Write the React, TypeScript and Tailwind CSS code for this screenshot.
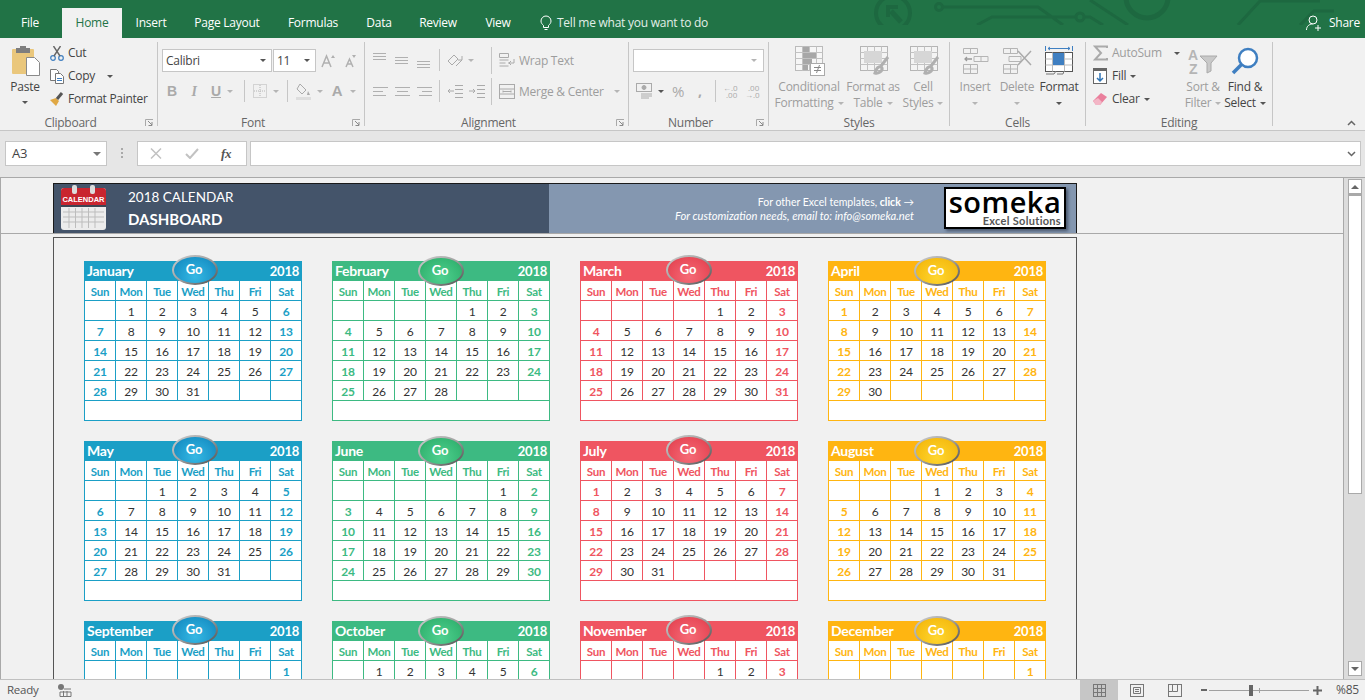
import React from "react";

const THEMES = [
  { bg: "bg-[#1b9fc6]", border: "border-[#1b9fc6]", text: "text-[#1b9fc6]", inner: "bg-[radial-gradient(ellipse_at_50%_75%,#35b8e4,#1a94c8_70%,#1279ad)]", go: "left-[88px] -top-[6px]" },
  { bg: "bg-[#3dba82]", border: "border-[#3dba82]", text: "text-[#3dba82]", inner: "bg-[radial-gradient(ellipse_at_50%_75%,#4fd08f,#35b673_70%,#1f9a5c)]", go: "left-[86px] -top-[5px]" },
  { bg: "bg-[#ef5561]", border: "border-[#ef5561]", text: "text-[#ef5561]", inner: "bg-[radial-gradient(ellipse_at_50%_75%,#f56a76,#e84a58_70%,#c9303f)]", go: "left-[86px] -top-[6px]" },
  { bg: "bg-[#ffb511]", border: "border-[#ffb511]", text: "text-[#ffb511]", inner: "bg-[radial-gradient(ellipse_at_50%_75%,#ffd52e,#f6bd12_70%,#dc9c06)]", go: "left-[86px] -top-[5px]" },
];
const MONTHS = ["January","February","March","April","May","June","July","August","September","October","November","December"];
const DAYS = ["Sun","Mon","Tue","Wed","Thu","Fri","Sat"];

function monthCells(m: number) {
  const first = new Date(2018, m, 1).getDay();
  const count = new Date(2018, m + 1, 0).getDate();
  const cells: (number | null)[] = [];
  for (let i = 0; i < first; i++) cells.push(null);
  for (let d = 1; d <= count; d++) cells.push(d);
  while (cells.length < 35) cells.push(null);
  return cells.slice(0, 35);
}

function Month({ m }: { m: number }) {
  const t = THEMES[m % 4];
  const cells = monthCells(m);
  return (
    <div className="relative w-[218px] h-[160px] font-['Lato',sans-serif]">
      <div className={`${t.bg} h-[20px] flex items-center justify-between pl-[3px] pr-[3px] text-white font-bold text-[14px] leading-[20px]`}>
        <span>{MONTHS[m]}</span>
        <span className="text-[13px]">2018</span>
      </div>
      <div className={`grid grid-cols-[repeat(7,31px)] border-l ${t.border} bg-white w-[218px]`}>
        {DAYS.map((d) => (
          <div key={d} className={`h-[20px] border-r border-b ${t.border} ${t.text} text-[11.5px] font-bold text-center leading-[22px]`}>{d}</div>
        ))}
        {cells.map((c, i) => (
          <div key={i} className={`h-[20px] border-r border-b ${t.border} text-[12px] text-center leading-[22px] ${i % 7 === 0 || i % 7 === 6 ? `${t.text} font-bold` : "text-[#333]"}`}>{c}</div>
        ))}
      </div>
      <div className={`h-[20px] bg-white border-l border-r border-b ${t.border}`} />
      <div className={`absolute ${t.go} w-[46px] h-[30px] rounded-[50%] bg-gradient-to-br from-[#d0d0d0] via-[#a0a0a0] to-[#4a4a4a] flex items-center justify-center`}>
        <div className={`w-[42px] h-[26px] rounded-[50%] ${t.inner} flex items-center justify-center text-white font-bold text-[13px] pr-[2px]`}>Go</div>
      </div>
    </div>
  );
}

function Caret({ dark }: { dark?: boolean }) {
  return <span className={`inline-block w-0 h-0 border-x-[3px] border-x-transparent border-t-[3px] ${dark ? "border-t-[#555]" : "border-t-[#b5b5b5]"}`} />;
}

function Launcher() {
  return (
    <svg className="absolute right-[3px] -bottom-[1px]" width="9" height="8" viewBox="0 0 9 8" fill="none">
      <path d="M.5 7V.5H8" stroke="#a9a9a9" /><path d="M3 2l4 4M7 3v3.5H3.5" stroke="#8a8a8a" />
    </svg>
  );
}

function Group({ className, label, launcher, pr, children }: { className: string; label: string; launcher?: boolean; pr?: boolean; children: React.ReactNode }) {
  return (
    <div className={`relative h-[84px] shrink-0 border-r border-[#c6c6c6] flex flex-col ${className}`}>
      <div className="h-[75px]">{children}</div>
      <div className={`h-[9px] leading-[11px] text-center text-[12px] text-[#666] ${pr ? "pr-[16px]" : ""}`}>{label}</div>
      {launcher && <Launcher />}
    </div>
  );
}

function Big({ className, icon, l1, l2, dim, caret = true }: { className: string; icon: React.ReactNode; l1: string; l2?: string; dim?: boolean; caret?: boolean }) {
  const col = dim ? "text-[#9d9d9d]" : "text-[#444]";
  return (
    <div className={`flex flex-col items-center ${className} ${col} whitespace-nowrap`}>
      <div className="mt-[4px] h-[30px] flex items-center justify-center">{icon}</div>
      <div className="mt-[3px] leading-[16px] h-[16px]">{l1}</div>
      <div className="leading-[16px] h-[16px] flex items-center gap-[4px]">
        {l2 && <span>{l2}</span>}
        {caret && <Caret dark={!dim} />}
      </div>
    </div>
  );
}

const Sep = ({ className }: { className: string }) => <div className={`w-px bg-[#c6c6c6] shrink-0 ${className}`} />;

function Lines({ ins, y, gap }: { ins: number[]; y: number; gap: number }) {
  return (
    <svg className="block" width="15" height="22" viewBox="0 0 15 22" stroke="#b0b0b0">
      {[0, 1, 2].map((i) => <path key={i} d={`M${ins[i]} ${y + i * gap + 0.5}H${15 - ins[i + 3]}`} />)}
    </svg>
  );
}

const GridIcon = () => (
  <svg className="ml-[3px]" width="30" height="30" viewBox="0 0 30 30" fill="none">
    <rect x=".5" y=".5" width="27" height="24" fill="#f4f4f4" stroke="#b5b5b5" />
    <path d="M.5 6.500h27M.5 12.500h27M.5 18.500h27M7.500.5v24M14.500.5v24M21.500.5v24" stroke="#c2c2c2" />
    <rect x="4" y="5" width="18" height="12" fill="#d6d6d6" />
    <path d="M28 11L21 20M16 24c2-4 5-4 6-2 1 3-4 6-7 5z" stroke="#b0b0b0" strokeWidth="3" />
  </svg>
);

export default function App() {
  return (
    <div className="w-[1365px] h-[700px] overflow-hidden flex flex-col bg-[#f1f1f1] font-['Open_Sans',sans-serif] text-[12px] tracking-[-0.25px] text-[#444]">
      {/* Title + tabs */}
      <div className="relative h-[38px] shrink-0 bg-[#217346] text-white text-[12px]">
        <svg className="absolute left-0 top-0" width="1365" height="25" viewBox="0 0 1365 25" fill="none" stroke="#1d6840" strokeWidth="3">
          <circle cx="893" cy="13" r="17" strokeWidth="4" />
          <path d="M891 11l10 11" strokeWidth="5" /><path d="M888 17V7h10" strokeWidth="4" />
          <circle cx="939" cy="7" r="3.5" />
          <path d="M943 7h95l25 18M977 25l15-8h84M1084 17h6l13 8M1090 0l38 25" />
          <circle cx="1147" cy="-3" r="21" strokeWidth="5" />
          <circle cx="1080" cy="17" r="4" />
          <path d="M1238 25L1260 1h60M1300 25l14-14h20" />
        </svg>
        <div className="relative flex items-end h-[38px]">
          <div className="w-[60px] mr-[2px] text-center leading-[30px] h-[30px]">File</div>
          <div className="w-[60px] text-center leading-[30px] h-[30px] bg-[#f1f1f1] text-[#217346]">Home</div>
          <div className="w-[58px] text-center leading-[30px] h-[30px]">Insert</div>
          <div className="w-[94px] text-center leading-[30px] h-[30px] whitespace-nowrap">Page Layout</div>
          <div className="w-[78px] text-center leading-[30px] h-[30px]">Formulas</div>
          <div className="w-[54px] text-center leading-[30px] h-[30px]">Data</div>
          <div className="w-[64px] text-center leading-[30px] h-[30px]">Review</div>
          <div className="w-[56px] text-center leading-[30px] h-[30px]">View</div>
          <div className="h-[30px] flex items-center pl-[14px] gap-[5px] text-[#e3efe8] whitespace-nowrap">
            <svg width="12" height="16" viewBox="0 0 12 16" fill="none" stroke="#fff" strokeWidth="1"><path d="M3.5 10.5C2 9 1 8 1 6a5 5 0 0110 0c0 2-1 3-2.5 4.5v2h-5zM4.5 14.500h3" /></svg>
            <span>Tell me what you want to do</span>
          </div>
          <div className="ml-auto h-[30px] flex items-center gap-[7px] pr-[5px] whitespace-nowrap">
            <svg width="16" height="16" viewBox="0 0 16 16" fill="none" stroke="#fff" strokeWidth="1"><circle cx="7" cy="5" r="4" /><path d="M0.500 15c0-4 3-6 6-6M9 13h6M12 10v6" /></svg>
            <span>Share</span>
          </div>
        </div>
      </div>

      {/* Ribbon */}
      <div className="relative h-[93px] shrink-0 border-b border-[#c6c6c6] pt-[4px] flex">
        {/* Clipboard */}
        <Group className="w-[158px]" label="Clipboard" launcher pr>
          <div className="flex">
            <div className="w-[50px] flex flex-col items-center">
              <svg className="mt-[4px] ml-[2px]" width="30" height="30" viewBox="0 0 30 30" fill="none">
                <rect x="1" y="3" width="22" height="25" rx="1" fill="#eac77c" />
                <rect x="5" y="2" width="14" height="5" fill="#7e7e7e" /><rect x="9" y="0" width="6" height="4" fill="#7e7e7e" />
                <path d="M15.500 11.500h8l5 5v13h-13z" fill="#fff" stroke="#8a8a8a" />
              </svg>
              <div className="mt-[3px] leading-[16px]">Paste</div>
              <div className="mt-[5px] leading-[0]"><Caret dark /></div>
            </div>
            <div className="flex flex-col whitespace-nowrap tracking-[-0.3px]">
              <div className="h-[22px] flex items-center gap-[4px]">
                <svg width="14" height="15" viewBox="0 0 14 15" fill="none"><circle cx="3" cy="12" r="2.300" stroke="#3f7fc1" strokeWidth="1.200" /><circle cx="11" cy="12" r="2.300" stroke="#3f7fc1" strokeWidth="1.200" /><path d="M4 10L10.500 0M10 10L3.500 0" stroke="#666" strokeWidth="1.400" /></svg>
                <span>Cut</span>
              </div>
              <div className="h-[24px] flex items-center gap-[4px]">
                <svg width="14" height="15" viewBox="0 0 14 15" fill="none" stroke="#777"><path d="M.5.5h6l2 2v9h-8z" fill="#fff" /><path d="M5.500 4.500h5l3 3v7h-8z" fill="#fff" /><path d="M7 9.500h5M7 11.500h5" stroke="#3f7fc1" /></svg>
                <span>Copy</span>
                <span className="ml-[8px] leading-[0]"><Caret dark /></span>
              </div>
              <div className="h-[22px] flex items-center gap-[4px]">
                <svg width="14" height="14" viewBox="0 0 14 14" fill="none"><path d="M0 8l6-2 3 3-3 5z" fill="#e0a844" /><path d="M7 7l5-6" stroke="#555" strokeWidth="3" /></svg>
                <span>Format Painter</span>
              </div>
            </div>
          </div>
        </Group>

        {/* Font */}
        <Group className="w-[207px]" label="Font" launcher pr>
          <div className="flex items-center mt-[7px] pl-[4px]">
            <div className="w-[110px] h-[23px] bg-white border border-[#c6c6c6] flex items-center justify-between pl-[3px] pr-[5px] text-[#444]">
              <span>Calibri</span><Caret dark />
            </div>
            <div className="w-[43px] h-[23px] bg-white border border-[#c6c6c6] ml-px flex items-center justify-between pl-[3px] pr-[5px]">
              <span>11</span><Caret dark />
            </div>
            <svg className="ml-[5px]" width="36" height="14" viewBox="0 0 36 14"><path d="M1 13L5.500 2 10 13M3 9h5M25 13l3.500-8 3.500 8M26.500 10h4" stroke="#b0b0b0" strokeWidth="1.500" fill="none" /><path d="M10 4l2-3 2 3zM31 1l2 3 2-3z" fill="#b0b0b0" /></svg>
          </div>
          <div className="flex items-center h-[18px] mt-[10px] pl-[3px] text-[#aaa]">
            <span className="w-[22px] text-center font-bold text-[14px] font-['Liberation_Sans',sans-serif]">B</span>
            <span className="w-[22px] text-center italic font-bold text-[14px] font-['Liberation_Serif',serif]">I</span>
            <span className="w-[22px] text-center font-bold underline text-[14px] font-['Liberation_Sans',sans-serif]">U</span>
            <span className="w-[12px] leading-[0]"><Caret /></span>
            <Sep className="h-[22px] ml-[5px]" />
            <svg className="ml-[8px]" width="15" height="15" viewBox="0 0 15 15" fill="none" stroke="#b5b5b5" strokeDasharray="1 1"><rect x=".5" y=".5" width="13" height="13" /><path d="M7 1v12M1 7h12" /></svg>
            <span className="w-[14px] pl-[5px] leading-[0]"><Caret /></span>
            <Sep className="h-[22px] ml-[5px]" />
            <svg className="ml-[8px]" width="16" height="17" viewBox="0 0 16 17"><path d="M4 1l6 6-4 4-5-5z" fill="none" stroke="#aaa" /><path d="M12 8l2 4h-3z" fill="#aaa" /><rect y="14" width="15" height="3" fill="#dedede" /></svg>
            <span className="w-[14px] pl-[5px] leading-[0]"><Caret /></span>
            <span className="w-[20px] text-center font-bold text-[15px] font-['Liberation_Sans',sans-serif] ml-[1px]">A</span>
            <span className="pl-[3px] leading-[0]"><Caret /></span>
          </div>
        </Group>

        {/* Alignment */}
        <Group className="w-[264px]" label="Alignment" launcher pr>
          <div className="flex items-center h-[30px] mt-[3px] pl-[8px]">
            <div className="w-[22px]"><Lines ins={[0, 0, 0, 2, 2, 2]} y={4} gap={3} /></div>
            <div className="w-[22px]"><Lines ins={[0, 0, 0, 2, 2, 2]} y={8} gap={3} /></div>
            <div className="w-[22px]"><Lines ins={[0, 0, 0, 2, 2, 2]} y={12} gap={3} /></div>
            <Sep className="h-[22px]" />
            <svg className="ml-[7px]" width="16" height="16" viewBox="0 0 16 16" fill="none" stroke="#aaa"><path d="M1 9l6-6 4 4-6 6zM9 14l6-6M15 4v4h-4" /></svg>
            <span className="ml-[5px] leading-[0]"><Caret /></span>
            <Sep className="h-[27px] ml-[17px]" />
            <svg className="ml-[7px]" width="17" height="16" viewBox="0 0 17 16" fill="none" stroke="#aaa"><path d="M.5 1.500h9v4h-9zM.5 8h9M.5 11h6M.5 14h9M9 11h6V7M12 9l-2 2 2 2" /></svg>
            <span className="ml-[3px] pt-[2px] text-[#9d9d9d] whitespace-nowrap">Wrap Text</span>
          </div>
          <div className="flex items-center h-[30px] mt-[1px] pl-[8px]">
            <div className="w-[22px]"><Lines ins={[0, 0, 0, 0, 5, 2]} y={7} gap={4} /></div>
            <div className="w-[22px]"><Lines ins={[0, 2, 0, 0, 2, 0]} y={7} gap={4} /></div>
            <div className="w-[22px]"><Lines ins={[0, 5, 2, 0, 0, 0]} y={7} gap={4} /></div>
            <Sep className="h-[22px]" />
            <svg className="ml-[7px]" width="38" height="14" viewBox="0 0 38 14" fill="none" stroke="#aaa"><path d="M8 1.500h8M8 5.500h8M8 9.500h8M8 13.500h8M1 7h6M3 5L1 7l2 2" /><path d="M30 1.500h8M30 5.500h8M30 9.500h8M30 13.500h8M22 7h6M26 5l2 2-2 2" /></svg>
            <Sep className="h-[27px] ml-[6px] mr-[7px]" />
            <svg width="16" height="15" viewBox="0 0 16 15" fill="none" stroke="#aaa"><rect x=".5" y=".5" width="15" height="14" /><path d="M.5 5h15M.5 10h15M4 7.500h8M4 6.500v2M12 6.500v2" /></svg>
            <span className="ml-[4px] pt-[2px] text-[#9d9d9d] whitespace-nowrap">Merge &amp; Center</span>
            <span className="ml-[10px] leading-[0]"><Caret /></span>
          </div>
        </Group>

        {/* Number */}
        <Group className="w-[140px]" label="Number" launcher pr>
          <div className="mt-[7px] ml-[4px] w-[131px] h-[23px] bg-white border border-[#c6c6c6] flex items-center justify-end pr-[6px]"><Caret /></div>
          <div className="flex items-center h-[18px] mt-[10px] pl-[7px] text-[#aaa]">
            <svg width="17" height="17" viewBox="0 0 17 17" fill="none" stroke="#aaa"><rect x=".5" y=".5" width="15" height="8" /><circle cx="8" cy="4.500" r="2" fill="#aaa" /><path d="M5 11h11M5 13h11M5 15h8" /></svg>
            <span className="ml-[5px] leading-[0]"><Caret dark /></span>
            <span className="ml-[6px] w-[16px] text-[15px] text-center">%</span>
            <span className="ml-[12px] w-[10px] text-[14px] font-bold leading-[12px]">,</span>
            <Sep className="h-[22px] ml-[7px]" />
            <div className="ml-[7px] w-[22px] text-[8px] leading-[7px] tracking-normal"><div>←.0</div><div className="pl-[3px]">.00</div></div>
            <div className="w-[16px] text-[8px] leading-[7px] tracking-normal"><div className="pl-[3px]">.00</div><div>→.0</div></div>
          </div>
        </Group>

        {/* Styles */}
        <Group className="w-[181px]" label="Styles">
          <div className="flex pl-[3px] text-[#9d9d9d]">
            <Big className="w-[74px]" dim l1="Conditional" l2="Formatting" icon={
              <svg className="ml-[2px]" width="30" height="30" viewBox="0 0 30 30" fill="none">
                <rect x=".5" y=".5" width="27" height="24" fill="#f6f6f6" stroke="#bbb" />
                <path d="M7.500.5v24M14.500.5v24M21.500.5v24M.5 6.500h27M.5 12.500h27M.5 18.500h27" stroke="#c2c2c2" />
                <rect x="8" y="1" width="6" height="5" fill="#a7a7a7" /><rect x="8" y="7" width="13" height="5" fill="#a7a7a7" /><rect x="8" y="13" width="9" height="5" fill="#a7a7a7" /><rect x="8" y="19" width="5" height="5" fill="#a7a7a7" />
                <rect x="15.500" y="17.500" width="14" height="12" fill="#fff" stroke="#aaa" />
                <path d="M19 21.500h7M19 24.500h7M24.500 19l-3 8" stroke="#888" />
              </svg>
            } />
            <Big className="w-[54px]" dim l1="Format as" l2="Table" icon={<GridIcon />} />
            <Big className="w-[46px]" dim l1="Cell" l2="Styles" icon={<GridIcon />} />
          </div>
        </Group>

        {/* Cells */}
        <Group className="w-[136px]" label="Cells">
          <div className="flex pl-[4px]">
            <Big className="w-[42px]" dim l1="Insert" icon={
              <svg width="27" height="26" viewBox="0 0 27 26" fill="none" stroke="#b5b5b5"><path d="M1.500.5h14v5h-14zM8.500.5v5M1.500 16.500h14v9h-14zM1.500 21h14M8.500 16.500v9M12 8.500h14v5H12zM19 8.500v5" /><path d="M10 11H3M5 9l-2 2 2 2" stroke="#999" strokeWidth="1.300" /></svg>
            } />
            <Big className="w-[42px]" dim l1="Delete" icon={
              <svg width="30" height="26" viewBox="0 0 30 26" fill="none" stroke="#b5b5b5"><path d="M1.500.5h14v5h-14zM8.500.5v5M1.500 16.500h14v9h-14zM1.500 21h14M8.500 16.500v9M7 8.500h12v5H7z" /><path d="M16 3l13 14M29 3L16 17" stroke="#aaa" strokeWidth="1.500" /></svg>
            } />
            <Big className="w-[42px]" l1="Format" icon={
              <svg width="28" height="31" viewBox="0 0 28 31" fill="none"><path d="M.5 0v5M27.500 0v5M3 2.500h22M5 1L3 2.500 5 4M23 1l2 1.500L23 4" stroke="#3f7fc1" /><rect x=".5" y="6.500" width="27" height="19" fill="#fff" stroke="#555" /><path d="M.5 13h27M.5 19h27M7.500 6.500v19M19.500 6.500v19" stroke="#bbb" /><rect x="8" y="7" width="11" height="12" fill="#3f7fc1" /><path d="M1 28h8l2-3M12 28h6l1-3" stroke="#777" /></svg>
            } />
          </div>
        </Group>

        {/* Editing */}
        <Group className="w-[187px]" label="Editing">
          <div className="flex">
            <div className="w-[96px] pl-[7px] flex flex-col whitespace-nowrap">
              <div className="h-[22px] flex items-center gap-[4px] text-[#9d9d9d]">
                <svg width="15" height="16" viewBox="0 0 15 16" fill="none"><path d="M14 3V1.500H2L8 8l-6 6.500h12V13" stroke="#aaa" strokeWidth="2" /></svg>
                <span>AutoSum</span>
                <span className="ml-[8px] leading-[0]"><Caret dark /></span>
              </div>
              <div className="h-[24px] flex items-center gap-[4px]">
                <svg width="15" height="16" viewBox="0 0 15 16" fill="none"><rect x=".5" y=".5" width="13" height="15" fill="#fff" stroke="#666" /><rect y="0" width="14" height="3" fill="#666" /><path d="M7 5v8M4 10l3 3 3-3" stroke="#2f74b5" strokeWidth="1.500" /></svg>
                <span>Fill</span>
                <Caret dark />
              </div>
              <div className="h-[22px] flex items-center gap-[4px]">
                <svg width="15" height="13" viewBox="0 0 15 13"><path d="M0 8l8-8 6 4-7 8H3z" fill="#ea7f9c" /><path d="M0 8l3 4h4l2-3-4-4z" fill="#f3b6c6" /></svg>
                <span>Clear</span>
                <Caret dark />
              </div>
            </div>
            <Big className="w-[42px]" dim l1="Sort &" l2="Filter" icon={
              <svg width="30" height="27" viewBox="0 0 30 27" fill="none"><text x="0" y="12" fontSize="14" fontWeight="700" fill="#b5b5b5" fontFamily="Liberation Sans">A</text><text x="1" y="26" fontSize="14" fontWeight="700" fill="#b5b5b5" fontFamily="Liberation Sans">Z</text><path d="M12 8h17l-6 7v8l-4 2v-10z" fill="#c9c9c9" stroke="#aaa" /></svg>
            } />
            <Big className="w-[42px]" l1="Find &" l2="Select" icon={
              <svg width="28" height="28" viewBox="0 0 28 28" fill="none"><circle cx="17" cy="11" r="9" fill="#fff" stroke="#3f7fc1" strokeWidth="2.500" /><path d="M10.500 17.500L2 26" stroke="#3f7fc1" strokeWidth="3.500" /></svg>
            } />
          </div>
        </Group>
        <svg className="absolute right-[9px] bottom-[4px]" width="9" height="6" viewBox="0 0 9 6" fill="none"><path d="M1 5l3.500-3.500L8 5" stroke="#666" strokeWidth="1.500" /></svg>
      </div>

      {/* Formula bar */}
      <div className="h-[47px] shrink-0 bg-[#e6e6e6] border-b border-[#a9a9a9] flex pt-[10px]">
        <div className="ml-[5px] w-[102px] h-[25px] bg-white border border-[#c6c6c6] flex items-center justify-between pl-[6px] pr-[5px] text-[13px]">
          <span>A3</span>
          <span className="inline-block w-0 h-0 border-x-[4px] border-x-transparent border-t-[4px] border-t-[#777]" />
        </div>
        <div className="w-[30px] h-[25px] flex items-center justify-center">
          <svg width="3" height="11" viewBox="0 0 3 11" fill="#a9a9a9"><rect width="2" height="2" x="0" /><rect width="2" height="2" y="4" /><rect width="2" height="2" y="8" /></svg>
        </div>
        <div className="w-[110px] h-[25px] bg-white border border-[#c6c6c6] flex items-center pl-[12px]">
          <svg width="12" height="11" viewBox="0 0 12 11" fill="none"><path d="M1 .5l10 10M11 .5l-10 10" stroke="#c2c2c2" strokeWidth="1.500" /></svg>
          <svg className="ml-[23px]" width="14" height="11" viewBox="0 0 14 11" fill="none"><path d="M1 6l4 4 8-9" stroke="#c2c2c2" strokeWidth="2" /></svg>
          <span className="ml-[22px] font-['Liberation_Serif',serif] italic font-bold text-[13px] text-[#555]">fx</span>
        </div>
        <div className="ml-[3px] w-[1111px] h-[25px] bg-white border border-[#c6c6c6] flex items-center justify-end pr-[4px]">
          <svg width="9" height="6" viewBox="0 0 9 6" fill="none"><path d="M1 1l3.500 3.500L8 1" stroke="#666" strokeWidth="1.500" /></svg>
        </div>
      </div>

      {/* Sheet */}
      <div className="flex-1 min-h-0 flex overflow-hidden">
        <div className="w-[1344px] border-l border-r border-[#a9a9a9] flex flex-col min-h-0">
          <div className="h-[56px] shrink-0 border-b border-[#a9a9a9] pl-[52px] pt-[5px]">
            <div className="w-[1024px] h-[50px] flex border-t border-x border-[#1a1a1a] font-['Lato',sans-serif] text-white tracking-normal">
              <div className="w-[495px] bg-[#44546a] flex">
                <svg className="ml-[7px] mt-[1px]" width="46" height="45" viewBox="0 0 46 45" fill="none">
                  <rect x="0" y="3" width="45" height="42" rx="3" fill="#ececec" />
                  <path d="M0 6a3 3 0 013-3h39a3 3 0 013 3v14H0z" fill="#c9252f" />
                  <rect x="0" y="20" width="45" height="2" fill="#3c4654" />
                  <path d="M2 27h41M2 32h41M2 37h41M8 23v20M14.500 23v20M21 23v20M27.500 23v20M34 23v20" stroke="#bdbdbd" />
                  <rect x="11" y="0" width="5" height="9" rx="2" fill="#dcdcdc" /><rect x="29" y="0" width="5" height="9" rx="2" fill="#dcdcdc" />
                  <text x="22.500" y="17" textAnchor="middle" fontSize="7.500" fontWeight="700" fill="#fff" fontFamily="Liberation Sans">CALENDAR</text>
                </svg>
                <div className="ml-[21px]">
                  <div className="mt-[3px] text-[13.500px] leading-[20px] whitespace-nowrap">2018 CALENDAR</div>
                  <div className="mt-[2px] text-[15px] font-bold leading-[20px] whitespace-nowrap">DASHBOARD</div>
                </div>
              </div>
              <div className="flex-1 bg-[#8497b0] flex">
                <div className="w-[365px] flex flex-col items-end pt-[11px] leading-[14px] whitespace-nowrap">
                  <div className="text-[10.500px]">For other Excel templates, <b>click</b> →</div>
                  <div className="italic text-[11.200px]">For customization needs, email to: info@someka.net</div>
                </div>
                <div className="ml-[30px] mt-[3px] w-[122px] h-[42px] bg-white border-2 border-black shadow-[2px_2px_3px_rgba(30,40,60,0.6)] flex flex-col items-center text-black font-['Open_Sans',sans-serif]">
                  <div className="text-[29px] h-[26px] leading-[26px] font-semibold tracking-[0.5px]">someka</div>
                  <div className="self-end pr-[3px] text-[11px] leading-[12px] font-bold text-[#555] tracking-[0.3px] font-['Lato',sans-serif] whitespace-nowrap">Excel Solutions</div>
                </div>
              </div>
            </div>
          </div>
          <div className="flex-1 min-h-0 pl-[52px] pt-[3px]">
            <div className="w-[1024px] h-[600px] border border-[#555] pl-[30px] pt-[23px] grid grid-cols-[repeat(4,218px)] gap-x-[30px] gap-y-[20px] content-start">
              {MONTHS.map((_, i) => <Month key={i} m={i} />)}
            </div>
          </div>
        </div>
        <div className="flex-1 bg-[#dcdcdc] pl-[4px] pr-[3px] pt-[1px] flex flex-col">
          <div className="h-[15px] shrink-0 bg-white border border-[#a9a9a9] flex items-center justify-center">
            <span className="inline-block w-0 h-0 border-x-[4px] border-x-transparent border-b-[4px] border-b-[#666]" />
          </div>
          <div className="h-[300px] shrink-0 bg-white border-x border-b border-[#a9a9a9] border-t-2" />
          <div className="mt-auto mb-[3px] h-[15px] shrink-0 bg-white border border-[#a9a9a9] flex items-center justify-center">
            <span className="inline-block w-0 h-0 border-x-[4px] border-x-transparent border-t-[4px] border-t-[#666]" />
          </div>
        </div>
      </div>

      {/* Status */}
      <div className="h-[21px] shrink-0 border-t border-[#c0c0c0] bg-[#f1f1f1] flex items-center text-[11.500px] text-[#555] relative z-10">
        <span className="ml-[7px]">Ready</span>
        <svg className="ml-[19px]" width="14" height="13" viewBox="0 0 14 13" fill="none"><circle cx="3" cy="3" r="3" fill="#777" /><path d="M2 8h11v4.500H2zM6 5h7" stroke="#777" /><path d="M5.500 7v6M9 7v6" stroke="#777" /></svg>
        <div className="ml-auto flex items-center h-[20px]">
          <div className="w-[38px] h-[20px] bg-[#c6c6c6] flex items-center justify-center">
            <svg width="13" height="13" viewBox="0 0 13 13" fill="none" stroke="#777"><rect x=".5" y=".5" width="12" height="12" /><path d="M4.500.5v12M8.500.5v12M.5 4.500h12M.5 8.500h12" /></svg>
          </div>
          <div className="w-[38px] flex justify-center">
            <svg width="14" height="13" viewBox="0 0 14 13" fill="none" stroke="#777"><rect x=".5" y=".5" width="13" height="12" /><path d="M3.500 3.500h7v6h-7zM5 5.500h4M5 7.500h4" /></svg>
          </div>
          <div className="w-[38px] flex justify-center">
            <svg width="14" height="13" viewBox="0 0 14 13" fill="none" stroke="#777"><rect x=".5" y=".5" width="13" height="12" /><path d="M4.500.5v7h5v-7M.5 7.500h4" /></svg>
          </div>
          <div className="ml-[7px] w-[6px] h-[2px] bg-[#666]" />
          <div className="relative ml-[2px] w-[100px] h-px bg-[#a0a0a0]">
            <div className="absolute left-[40px] -top-[5px] w-[4px] h-[11px] bg-[#666]" />
            <div className="absolute left-[50px] -top-[2px] w-px h-[5px] bg-[#a0a0a0]" />
          </div>
          <svg className="ml-[4px]" width="9" height="9" viewBox="0 0 9 9"><path d="M0 4.500h9M4.500 0v9" stroke="#666" strokeWidth="2" /></svg>
          <span className="ml-[14px] mr-[8px] w-[21px] text-[12px] whitespace-nowrap">%85</span>
        </div>
      </div>
    </div>
  );
}
